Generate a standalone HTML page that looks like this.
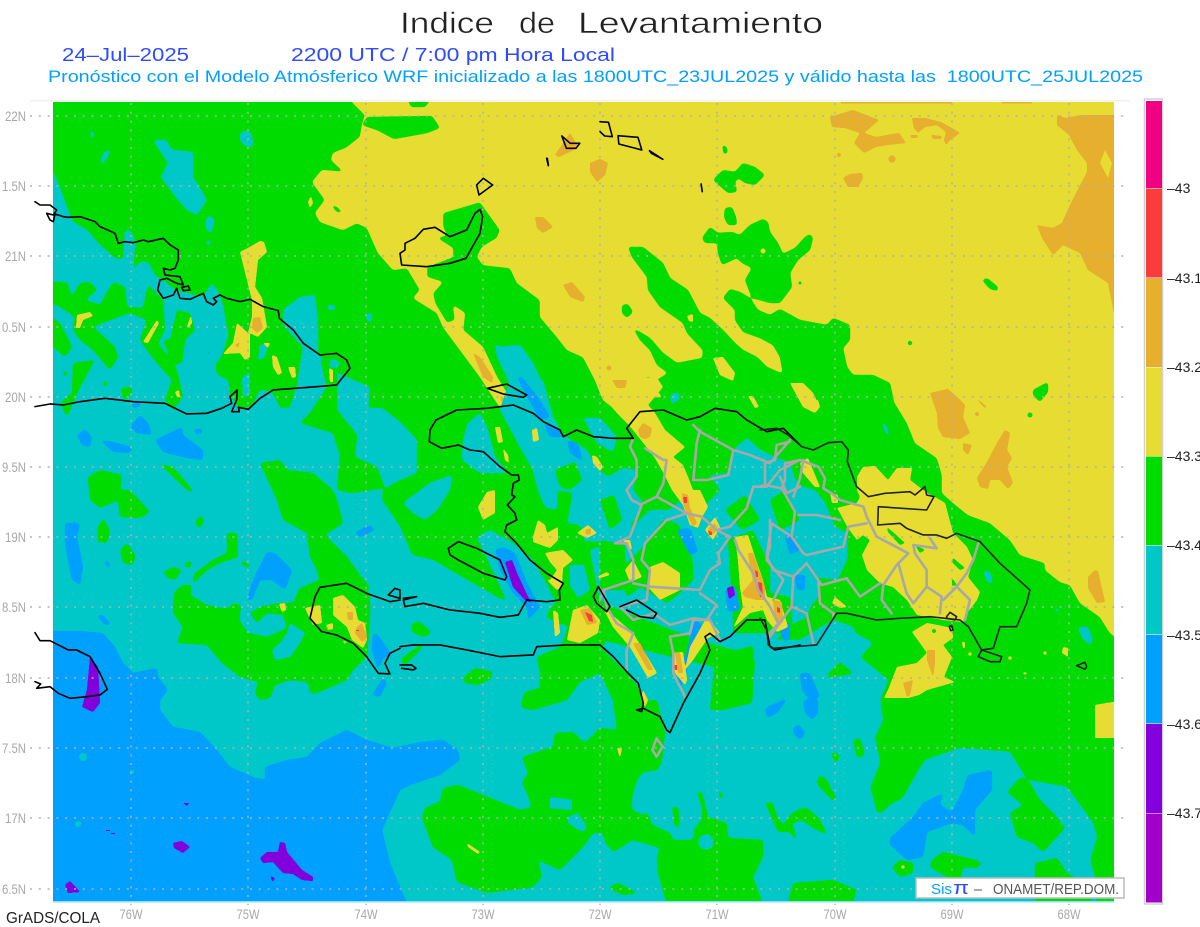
<!DOCTYPE html>
<html lang="es"><head><meta charset="utf-8"><title>Indice de Levantamiento</title>
<style>
html,body{margin:0;padding:0;background:#fff;width:1200px;height:927px;overflow:hidden}
svg{display:block}
text{font-family:"Liberation Sans",sans-serif}
.c{fill:none;stroke-linejoin:round;stroke-linecap:round}
.c polyline{vector-effect:non-scaling-stroke}
</style></head><body>
<svg width="1200" height="927" viewBox="0 0 1200 927" xmlns="http://www.w3.org/2000/svg">
<defs>
<clipPath id="m"><rect x="53" y="102" width="1061" height="799"/></clipPath>
<filter id="s" filterUnits="userSpaceOnUse" x="0" y="60" width="1200" height="867" color-interpolation-filters="sRGB">
<feGaussianBlur stdDeviation="1.5"/><feComponentTransfer><feFuncA type="linear" slope="8" intercept="-3.1"/></feComponentTransfer>
</filter>
<filter id="t" filterUnits="userSpaceOnUse" x="0" y="60" width="1200" height="867" color-interpolation-filters="sRGB">
<feGaussianBlur stdDeviation=".8"/><feComponentTransfer><feFuncA type="linear" slope="8" intercept="-3.1"/></feComponentTransfer>
</filter>
</defs>
<rect width="1200" height="927" fill="#fff"/>
<rect x="30" y="100" width="1100" height="1.5" fill="#f0f0f0"/>
<g clip-path="url(#m)">
<rect x="53" y="102" width="1061" height="799" fill="#00dc00"/>
<!-- big yellow -->
<g fill="#e6dc32" filter="url(#s)">
<polygon points="347,90 352,102 365,115 362,125 360,137 346,148 333,153 331,160 344,172 322,170 312,182 325,200 315,213 320,222 343,230 357,223 367,228 378,253 393,270 407,268 420,290 413,298 437,313 443,327 460,350 480,377 497,403 510,420 520,437 525,423 513,403 497,377 483,347 463,330 465,313 453,305 455,320 447,323 435,303 433,293 443,282 427,277 427,267 453,257 453,248 437,238 447,235 443,227 443,213 480,202 500,230 497,238 482,247 477,257 483,265 510,268 517,283 540,300 540,317 557,337 567,350 583,357 595,380 603,400 620,413 640,397 690,397 720,398 893,400 907,423 915,443 937,458 942,475 942,493 952,502 968,515 990,523 1010,540 1020,555 1045,563 1045,570 1060,582 1070,585 1080,603 1100,617 1110,633 1125,645 1125,90"/>
</g>
<rect x="841" y="102" width="111" height="1.5" fill="#e6af2d"/><rect x="1002" y="102" width="30" height="1.5" fill="#e6af2d"/>
<!-- orange north -->
<g fill="#e6af2d" filter="url(#t)">
<polygon points="1057,115 1065,118 1082,115 1125,115 1125,325 1114,313 1108,283 1088,270 1080,253 1063,245 1053,255 1042,238 1037,225 1053,228 1062,223 1070,205 1087,172 1087,163 1077,150 1069,135 1057,125"/>
<polygon points="830,117 853,110 866,115 879,120 864,133 876,137 899,133 906,143 887,145 876,147 864,153 854,143 860,133 845,128 832,127"/>
<polygon points="912,118 925,118 941,122 950,127 960,133 950,140 946,145 944,140 946,132 937,125 925,127 918,133 914,128"/>
<polygon points="910,135 918,135 917,138 911,138"/><polygon points="931,135 942,136 941,139 933,139"/>
<circle cx="892" cy="159" r="3.5"/><circle cx="839" cy="155" r="2"/>
<polygon points="843,178 850,174 862,173 863,178 858,187 848,187"/>
<polygon points="590,163 600,159 608,163 605,175 597,182 590,172"/>
<polygon points="555,155 570,133 576,143 578,148 559,157"/>
<polygon points="535,217 543,217 553,227 543,233 537,228"/>
<polygon points="563,285 572,282 585,297 583,302 570,297"/>
<circle cx="609" cy="368" r="2.5"/>
<polygon points="612,378 625,378 627,387 617,390"/>
<polygon points="631,400 634,400 634,408 632,408"/>
<polygon points="473,353 480,357 493,377 492,383 483,377"/>
<polygon points="500,397 503,397 508,413 505,412"/>
<polygon points="930,393 948,389 957,397 965,405 963,417 970,433 960,439 943,437 938,428 937,413"/>
<polygon points="963,443 972,445 968,455 963,450"/>
<polygon points="1005,430 1010,433 1007,450 1012,458 1007,467 1013,483 1008,489 1000,480 990,480 988,489 980,487 977,478 987,462 997,443"/>
<polygon points="1095,570 1098,571 1105,602 1097,603 1088,588 1088,577"/>
<polygon points="975,397 987,407 985,408 980,403"/><circle cx="977" cy="414" r="2"/>
</g>
<polygon fill="#e6dc32" points="1100,163 1105,150 1112,163 1108,178"/>
<!-- green over yellow -->
<g fill="#00dc00" filter="url(#s)">
<polygon points="628,247 643,247 663,263 670,278 688,290 700,313 710,318 723,330 735,343 743,350 757,357 767,367 783,374 780,357 773,345 760,338 743,332 735,320 735,310 723,298 730,289 740,292 750,298 758,310 770,315 780,309 800,320 827,325 833,318 850,325 850,340 843,348 847,367 853,375 873,375 890,383 895,407 903,420 903,430 720,430 717,397 702,363 703,350 700,347 687,333 683,323 660,307 648,290 647,277 632,257"/>
<polygon points="633,328 640,332 650,338 663,353 677,363 703,358 705,368 717,397 720,405 692,405 663,405 657,380 668,373 657,365 650,350 640,340"/>
<polygon points="643,380 648,377 657,382 665,391 653,393"/>
<polygon points="702,238 710,227 718,233 732,232 740,235 750,225 763,219 768,222 770,232 778,243 783,254 795,248 805,237 810,234 813,238 810,250 798,260 790,273 792,287 780,303 770,303 752,298 745,280 752,268 742,263 737,258 722,265 718,253 717,243 705,243"/>
<polygon points="713,180 723,170 735,172 743,163 755,167 765,175 755,185 745,183 738,178 735,182 737,192 728,193"/>
<polygon points="725,208 732,207 736,217 737,225 728,225 724,217"/>
<polygon points="722,145 726,146 728,152 724,155"/>
<polygon points="982,280 987,278 998,287 998,291 990,289"/>
<polygon points="1033,390 1048,382 1048,392 1040,402 1033,395"/>
<polygon points="406,95 434,95 425,107 411,107"/>
<polygon points="367,117 432,116 440,128 427,133 394,139 377,130 362,125"/>
<polygon points="330,204 337,207 343,213 337,212"/>
<polygon points="622,305 628,304 633,312 627,318 622,313"/>
</g>
<g fill="#00dc00"><circle cx="800" cy="283" r="1.5"/><circle cx="910" cy="343" r="2.2"/><circle cx="1030" cy="415" r="2.5"/></g>
<g fill="#e6dc32" filter="url(#t)">
<polygon points="713,358 723,357 735,373 733,381 720,375"/>
<polygon points="790,383 803,383 813,393 820,407 815,413 803,407"/>
<polygon points="748,396 753,396 759,407 755,408"/>
<polygon points="687,316 693,314 693,322 689,321"/>
<polygon points="308,202 311,196 313,203 310,208"/>
<circle cx="763" cy="251" r="2.5"/>
</g>
<!-- cyan -->
<g fill="#00c8c8" filter="url(#s)">
<polygon points="40,165 53,172 61,190 66,205 73,222 87,230 100,245 115,258 123,260 125,230 132,232 135,245 133,270 140,262 148,262 155,275 165,282 175,290 203,297 212,283 217,290 223,305 228,335 222,355 215,365 217,375 228,380 230,395 240,410 253,405 260,390 272,392 280,408 290,408 297,385 303,347 283,325 283,310 300,297 315,295 318,322 318,355 337,373 370,387 368,408 382,408 400,422 417,440 417,473 400,480 383,490 382,500 400,527 412,555 433,560 467,580 497,597 510,603 600,640 717,668 755,668 753,640 800,640 833,620 853,627 855,633 873,643 860,657 888,680 880,700 883,720 875,737 880,763 870,787 877,813 886,813 886,915 40,915"/>
<polygon points="878,817 890,805 903,798 913,780 925,760 960,748 1010,752 1027,780 1067,787 1093,823 1097,837 1090,860 1095,877 1097,915 878,915"/>
<polygon points="153,140 166,140 172,150 193,152 193,177 207,200 197,215 187,210 178,200 161,177 168,163"/>
<polygon points="90,130 93,131 95,138 91,137"/>
<polygon points="100,162 104,152 111,150 107,158 102,164"/>
<polygon points="240,134 246,130 252,135 253,147 245,146 240,140"/>
<polygon points="208,215 215,220 210,235 205,225"/>
<polygon points="206,240 211,241 210,246 207,245"/>
<polygon points="327,305 335,305 335,310 329,310"/>
<polygon points="366,314 372,313 372,321 367,322"/>
<polygon points="495,343 500,347 520,345 533,363 543,385 510,385 507,377 497,357"/>
<polygon points="510,380 543,380 553,417 563,435 587,450 597,468 608,477 623,468 637,470 633,490 643,503 630,527 617,543 573,540 568,520 573,493 557,490 557,510 545,507 538,490 533,470 520,447 500,410"/>
<polygon points="583,418 600,418 617,437 613,452 597,443"/>
<polygon points="468,423 480,413 487,427 495,457 508,473 480,473 462,460 463,440"/>
<polygon points="403,503 430,483 452,475 450,490 437,510 425,520 413,513"/>
<polygon points="477,537 490,530 513,543 533,560 542,577 560,583 557,600 547,613 543,633 527,640 517,623"/>
<polygon points="693,487 702,477 728,473 733,450 747,438 760,450 777,458 790,463 795,480 803,487 815,490 825,503 835,527 847,533 847,560 837,580 817,577 818,597 810,607 807,617 790,625 775,640 735,650 700,640 660,625 620,610 600,600 590,550 620,540 650,510 670,510"/>
<polygon points="670,395 678,392 680,398 672,405" />
<polygon points="882,423 885,423 890,435 886,434"/>
<polygon points="1078,627 1088,627 1093,640 1090,645 1082,638"/>
<polygon points="1053,608 1060,609 1057,613"/>
<polygon points="983,570 990,572 993,583 988,583"/>
<polygon points="330,358 340,362 338,368 331,366"/>
</g>
<!-- green islands on cyan -->
<g fill="#00dc00" filter="url(#s)">
<polygon points="45,282 67,282 72,297 80,283 90,282 97,290 85,300 100,305 113,282 125,287 127,307 143,308 148,285 163,300 165,330 158,343 177,370 183,397 173,410 165,400 172,380 152,357 140,340 147,320 130,313 110,320 93,327 115,347 118,357 110,370 93,350 80,340 73,330 75,317 60,307 45,300"/>
<polygon points="45,313 60,323 72,347 65,357 45,340"/>
<polygon points="73,363 95,360 80,387 67,417 60,403 72,393"/>
<polygon points="62,370 68,373 65,378"/>
<polygon points="102,385 107,378 107,387"/>
<polygon points="122,387 133,388 128,400 122,397"/>
<polygon points="177,310 190,313 195,330 185,340 182,363 173,365 163,340 170,340"/>
<polygon points="155,463 173,467 195,493 187,490 163,467"/>
<polygon points="88,477 100,470 122,475 120,490 130,490 150,512 140,518 120,517 118,500 100,508 90,500"/>
<polygon points="98,527 103,518 110,530 107,543 98,542"/>
<polygon points="120,550 127,543 136,557 132,565 123,563"/>
<polygon points="195,523 200,515 204,520 200,529"/>
<polygon points="163,572 173,567 182,570 175,580 168,578"/>
<polygon points="182,567 190,560 192,567"/>
<polygon points="192,585 195,573 213,560 227,553 227,533 237,533 238,557 220,563 207,570 197,580"/>
<polygon points="240,560 250,565 250,568 242,565"/>
<polygon points="174,593 182,585 192,585 190,595 207,605 220,608 228,608 235,602 241,607 239,620 248,633 267,637 287,628 283,615 267,613 257,623 250,613 260,607 280,603 293,603 300,588 320,580 347,583 370,593 370,617 367,657 353,670 347,680 317,693 310,693 308,682 290,680 275,685 270,698 260,700 255,693 258,682 240,677 222,663 207,645 177,643 183,627 173,613"/>
<polygon points="277,500 283,520 307,533 310,557 317,570 320,582 347,585 372,590 360,575 347,557 325,535 343,523 337,500"/>
<polygon points="260,463 280,460 287,470 313,473 333,490 337,500 277,500"/>
<polygon points="320,357 337,373 337,410 357,435 355,457 377,467 385,488 352,493 337,490 340,455 333,433 300,423 310,413 327,387"/>
<polygon points="382,500 400,490 417,480 450,450 417,440 417,475 400,480 383,490"/>
<polygon points="67,642 75,648 83,670 78,680 72,682 77,670 72,657"/>
<polygon points="412,623 420,622 432,633 423,637 412,632"/>
<polygon points="400,660 410,652 425,642 420,650 405,665"/>
<polygon points="463,678 475,668 493,672 490,680 477,685 465,683"/>
<polygon points="522,700 525,692 540,688 540,673 537,657 560,647 600,647 613,660 627,673 640,690 647,703 657,700 613,700 600,673 580,682 567,700 533,710 522,708"/>
<polygon points="422,818 425,808 440,802 443,788 458,785 483,795 520,810 532,807 527,793 522,783 528,773 522,757 553,747 555,733 573,732 585,743 600,728 617,730 613,700 657,700 665,733 662,760 658,770 643,772 637,780 632,797 632,810 643,815 648,813 652,825 670,833 673,840 693,840 695,827 702,820 702,807 697,792 702,792 708,817 727,823 728,838 763,840 763,857 753,877 767,915 670,915 658,873 657,857 660,848 633,840 613,852 605,842 603,833 593,833 583,847 560,870 538,860 542,877 533,887 487,893 457,882 452,860 433,847"/>
<polygon points="710,710 715,660 755,660 752,703 723,710"/>
<polygon points="765,802 773,803 777,817 783,825 792,813 805,807 818,817 828,835 813,828 802,820 792,823 798,843 790,832 778,832"/>
<polygon points="817,777 825,777 837,800 832,800 818,785"/>
<polygon points="853,740 860,738 865,755 857,758"/>
<polygon points="832,752 840,755 837,763 832,758"/>
<polygon points="672,807 678,807 680,827 675,827"/>
<polygon points="718,793 723,792 722,802"/>
<polygon points="785,915 793,883 833,880 857,890 848,915"/>
<polygon points="608,888 618,883 638,893 623,895"/>
<polygon points="825,677 840,662 853,673 847,675 830,677"/>
<polygon points="1007,792 1020,778 1027,778 1040,800 1055,815 1065,828 1043,852 1033,843 1017,837 1010,813 1023,805"/>
<polygon points="1035,863 1057,858 1067,873 1090,887 1093,915 1037,915 1035,877"/>
<polygon points="932,860 943,852 975,860 982,863 977,868 963,867 960,880 947,877 930,867"/>
<polygon points="892,867 900,860 913,863 913,873 900,877"/>
<polygon points="643,547 663,520 677,523 690,543 693,567 693,580 680,593 667,603 640,587 627,597 620,570"/>
<polygon points="728,540 753,530 770,567 770,593 790,597 793,633 733,633 733,613"/>
<polygon points="560,650 577,600 590,598 610,620 605,645"/>
<polygon points="555,470 575,462 582,480 570,490 560,487"/>
<polygon points="600,500 614,495 622,520 610,530"/>
<polygon points="690,480 705,470 720,490 700,510"/>
<polygon points="725,510 745,495 760,520 742,530"/>
<polygon points="770,500 785,490 800,520 780,530"/>
<polygon points="600,540 625,545 625,590 600,590"/>
<polygon points="540,520 580,525 590,560 585,600 555,600 540,570"/>
</g>
<g fill="#00c8c8" filter="url(#t)">
<polygon points="272,650 280,643 287,633 290,623 305,633 300,643 290,657 275,660"/>
<polygon points="550,797 572,800 572,810 550,808"/>
<polygon points="568,817 578,813 587,827 582,832 568,823"/>
<circle cx="706" cy="842" r="7.5"/>
<polygon points="260,345 268,343 265,357 258,360"/>
<polygon points="242,378 250,372 250,395 243,397"/>
<polygon points="570,565 584,565 590,590 578,598 570,585"/>
<polygon points="700,545 715,550 718,565 705,575"/>
</g>
<!-- blue -->
<g fill="#00a0ff" filter="url(#s)">
<polygon points="40,631 78,631 103,633 115,647 123,663 133,673 157,668 158,677 168,690 160,700 160,710 173,727 200,732 217,750 230,767 253,777 265,780 265,767 287,760 307,757 320,743 347,730 367,740 393,748 420,742 443,740 458,750 460,760 440,775 410,785 400,790 382,830 390,863 400,887 412,915 40,915"/>
<polygon points="890,838 913,817 923,803 943,793 940,805 952,812 963,790 968,775 992,770 992,790 975,810 975,837 963,825 952,823 927,832 923,857 907,860 890,845"/>
<polygon points="130,427 140,415 148,423 152,435 137,433"/>
<polygon points="155,440 182,427 183,435 203,450 203,460 187,458 163,452"/>
<polygon points="77,435 85,429 92,437 90,447 82,445"/>
<polygon points="100,440 113,442 132,447 130,453 113,452"/>
<polygon points="193,430 202,428 202,433 197,435"/>
<polygon points="132,403 140,402 142,405 133,409"/>
<polygon points="207,352 212,350 208,357"/>
<polygon points="65,523 80,523 77,537 83,567 80,585 72,580 68,560 65,543"/>
<polygon points="105,560 110,563 110,568 105,565"/>
<polygon points="247,600 253,580 267,552 275,553 292,570 285,590 272,580 260,580 252,600"/>
<polygon points="97,615 103,615 111,625 105,625"/>
<polygon points="355,532 370,525 375,530 360,537"/>
<polygon points="373,633 378,635 392,655 383,658 378,670 372,650"/>
<polygon points="372,695 383,678 387,683 380,697"/>
<polygon points="517,377 522,377 540,400 550,417 540,420"/>
<polygon points="543,423 560,430 563,437 550,437"/>
<polygon points="567,440 578,443 583,462 570,453"/>
<polygon points="495,550 503,547 515,553 527,583 540,607 528,620 527,607 513,593 500,570"/>
<polygon points="677,530 690,528 698,552 690,555"/>
<polygon points="725,590 735,585 740,610 728,612"/>
<polygon points="765,708 788,698 777,713 767,718"/>
<polygon points="803,700 818,700 818,713 812,720 805,713"/>
<polygon points="792,730 798,724 805,732 802,739 797,738"/>
<polygon points="800,673 810,673 820,697 810,700 802,690"/>
<polygon points="780,625 790,622 790,640 782,640"/>
<polygon points="785,535 793,535 800,550 790,555"/>
<polygon points="795,575 805,575 805,590 797,590"/>
<polygon points="675,660 685,658 695,620 702,625 680,690"/>
</g>
<!-- yellow islands -->
<g fill="#e6dc32" filter="url(#t)">
<polygon points="597,380 603,397 617,413 627,423 633,430 645,445 655,458 663,472 672,490 683,505 690,525 698,528 702,517 708,507 700,490 693,490 688,477 683,465 673,457 685,447 665,430 655,413 648,405 663,387 657,378 597,378"/>
<polygon points="857,477 863,467 875,466 888,480 897,468 912,468 910,480 927,493 935,497 945,503 953,533 967,547 973,560 968,577 980,592 977,600 967,613 963,622 943,620 917,615 907,600 893,587 880,583 867,570 862,555 870,540 863,535 857,540 848,528 840,513 837,508 857,503 860,497 857,490"/>
<polygon points="800,463 808,458 820,487 815,487 803,473"/><polygon points="830,493 838,495 838,503 832,503"/>
<polygon points="835,597 847,607 840,608 832,603"/>
<polygon points="800,400 818,400 820,407 815,412 807,407"/>
<polygon points="912,632 927,623 952,628 953,638 943,645 952,657 944,677 955,682 927,690 919,695 908,698 884,698 888,690 897,667 917,663 927,653 920,643"/>
<polygon points="1063,647 1068,648 1068,657 1062,653"/><polygon points="962,642 965,642 965,648 963,648"/>
<polygon points="1023,672 1028,673 1024,675"/><circle cx="1010" cy="658" r="1.8"/><circle cx="970" cy="654" r="1.8"/><circle cx="1045" cy="653" r="1.8"/>
<polygon points="1095,705 1125,700 1125,738 1095,738"/>
<polygon points="240,252 248,248 260,241 264,242 267,252 258,260 255,287 262,298 267,327 258,337 250,333 250,357 245,360 240,353 223,354 233,343 237,323 248,333 252,317 252,300 247,280"/>
<polygon points="77,315 90,312 93,316 83,320 80,328 76,328"/>
<polygon points="143,342 157,320 159,323 148,343"/>
<polygon points="187,327 191,315 192,323 188,328"/>
<polygon points="263,343 270,343 268,348"/>
<polygon points="272,355 277,357 282,373 278,375 273,367"/>
<polygon points="288,367 295,367 296,377 292,378"/>
<polygon points="329,368 333,370 333,382 330,382"/>
<polygon points="175,392 179,390 180,397 177,397"/>
<polygon points="333,598 343,595 355,607 358,620 365,623 367,640 363,648 352,640 347,627 333,615"/>
<polygon points="305,608 320,605 322,623 313,625"/>
<polygon points="279,604 285,603 286,610 282,612"/>
<polygon points="326,625 333,623 333,629 328,630"/>
<polygon points="342,640 347,642 345,644"/>
<polygon points="478,507 487,492 495,490 495,513 483,520"/>
<polygon points="495,427 500,427 503,442 498,443"/>
<polygon points="532,430 537,428 539,440 533,442"/>
<polygon points="503,448 508,455 509,463 505,460"/>
<polygon points="592,455 597,457 603,467 600,471 593,463"/>
<polygon points="533,537 538,520 545,525 547,533 558,527 558,540 550,548 533,542"/>
<polygon points="577,533 588,525 597,533 587,538"/>
<polygon points="545,553 563,550 573,560 563,568 562,583 550,580 557,570 550,562"/>
<polygon points="567,640 573,610 587,605 600,620 598,633 580,643"/>
<polygon points="553,610 558,613 560,633 555,637"/>
<polygon points="603,608 610,613 633,633 657,673 648,678 630,647 613,627"/>
<polygon points="673,653 683,652 687,680 685,685 675,673"/>
<polygon points="690,647 707,617 720,633 708,638 693,660 685,670"/>
<polygon points="705,530 715,517 720,527 713,540"/>
<polygon points="623,540 630,540 632,550 627,547"/>
<polygon points="597,577 607,572 610,575 600,578"/>
<polygon points="625,570 633,560 642,577 630,582"/>
<polygon points="547,580 560,580 563,587 557,590"/>
<polygon points="643,690 648,700 645,707 641,697"/>
<polygon points="617,748 622,748 620,758"/>
<polygon points="467,843 480,852 478,854 468,847"/>
<polygon points="650,567 663,562 680,573 680,590 660,600 648,587"/>
<polygon points="735,537 748,535 755,557 763,580 767,597 780,600 788,627 777,632 767,620 763,610 750,613 733,628 743,607 740,587 738,560"/>
<circle cx="903" cy="867" r="1.8"/>
</g>
<g fill="#00dc00" filter="url(#t)">
<polygon points="887,527 905,543 900,545 888,532"/>
<polygon points="953,558 965,568 960,570 952,562"/>
<polygon points="952,578 957,585 952,586"/>
<polygon points="915,545 925,550 920,553"/>
<circle cx="934" cy="631" r="2"/>
</g>
<!-- orange islands -->
<g fill="#e6af2d" filter="url(#t)">
<polygon points="638,430 643,423 652,428 650,437 645,439 640,437"/>
<polygon points="612,380 627,380 625,388 617,388"/>
<polygon points="682,493 688,495 690,508 697,523 693,527 688,517 683,503"/>
<polygon points="253,318 260,317 263,328 257,333 252,328"/>
<polygon points="235,345 240,342 238,348"/>
<polygon points="347,612 353,612 353,620 348,620"/>
<polygon points="357,627 362,623 367,638 362,642 355,633"/>
<polygon points="927,650 935,650 935,663 933,677 927,660"/>
<polygon points="903,683 913,680 910,695 907,697"/>
<polygon points="748,553 753,553 765,587 765,600 757,600 745,597 742,593 753,580 750,567"/>
<polygon points="773,600 782,602 783,623 775,620"/>
<polygon points="580,610 590,608 597,623 587,625"/>
<polygon points="633,643 640,643 653,670 648,670"/>
<polygon points="675,653 680,653 683,673 678,673"/>
<polygon points="708,528 715,523 717,530 712,535"/>
<polygon points="585,530 591,528 591,534 586,535"/>
</g>
<g fill="#fa3c3c">
<polygon points="683,497 687,497 687,503 684,503"/>
<polygon points="755,570 758,572 758,577 756,577"/>
<polygon points="758,582 762,583 763,597 760,597"/>
<polygon points="777,607 780,608 780,613 777,612"/>
<polygon points="585,612 592,615 593,622 589,621"/>
<polygon points="673,665 677,665 677,670 675,670"/>
<polygon points="708,530 712,532 712,535 709,535"/>
<rect x="356" y="630" width="3" height="1"/>
</g>
<!-- purple -->
<g fill="#8200dc" filter="url(#t)">
<polygon points="505,562 512,560 517,573 528,597 532,603 525,600 513,587"/>
<polygon points="90,657 98,667 100,703 93,712 82,707 87,690"/>
<polygon points="260,858 267,852 278,852 280,842 285,843 287,852 302,870 313,877 313,881 302,880 293,874 283,873 273,862 263,863"/>
<polygon points="270,876 275,878 273,882"/>
<polygon points="173,843 182,841 190,847 183,853 174,848"/>
<polygon points="65,885 70,881 80,892 68,893"/>
<polygon points="727,588 733,586 735,595 729,599"/>
</g>
<g fill="#8200dc"><polygon points="183,803 189,803 187,806"/>
<rect x="106" y="830" width="4" height="1"/><rect x="111" y="833" width="4" height="1"/></g>
<g fill="#00c8c8"><circle cx="78" cy="824" r="3"/><circle cx="83" cy="757" r="4"/><circle cx="132" cy="772" r="2"/></g>
</g>

<!-- grid -->
<g stroke="#b0b0b0" stroke-width="1.5" stroke-dasharray="2 6.8" fill="none">
<path d="M30 116H1130M30 186H1130M30 256H1130M30 327H1130M30 397H1130M30 467H1130M30 537H1130M30 607H1130M30 678H1130M30 748H1130M30 818H1130M30 889H1130"/>
<path d="M131 103V905M248 103V905M366 103V905M483 103V905M600 103V905M717 103V905M835 103V905M952 103V905M1069 103V905"/>
</g>

<!-- provinces gray -->
<g class="c" stroke="#a8a8a8" stroke-width="2.6" clip-path="url(#m)">
<g transform="translate(400,380) scale(.3333)">
<polyline points="700,175 690,200 710,240 710,290 680,330 695,360 725,375 690,470 645,490 680,490 700,540 700,600 610,630 600,660"/>
<polyline points="735,205 790,240 800,240 790,310 770,350 720,375"/>
<polyline points="770,350 860,400 905,410 950,450 990,470 955,520 960,550 930,570 900,630 750,620 700,610"/>
<polyline points="735,490 800,420 860,400"/>
<polyline points="735,490 725,540 750,570 740,660 660,680 700,720 760,700 810,735 880,715 920,720 950,675 900,640"/>
<polyline points="880,300 920,300 985,285 1000,210"/>
<polyline points="880,135 900,155 1000,210 1050,225 1110,250 1170,180"/>
<polyline points="880,300 890,190 900,150"/>
<polyline points="1200,240 1140,270 1100,320 1060,320 1040,385 990,440 950,450"/>
<polyline points="1005,480 1015,510 1060,580 1075,630 1110,680 1135,730 1100,770"/>
<polyline points="1200,320 1160,340 1140,290"/>
<polyline points="1110,420 1110,500 1100,540 1150,600 1120,660"/>
<polyline points="610,630 620,680 650,730 700,760 680,810 680,870"/>
<polyline points="810,770 820,820 820,880 855,950"/>
<polyline points="810,770 870,760 880,720 930,720 960,780"/>
<polyline points="770,1075 788,1100 770,1130 757,1110 770,1075"/>
</g>
<g transform="translate(760,400) scale(.3333)">
<polyline points="90,125 50,135 45,180 15,190 15,255 65,265 75,240 75,190 120,180 175,200 195,235 190,265 215,280 240,300 310,320 320,350 350,410 445,460 410,495 370,555 365,600 395,640"/>
<polyline points="15,255 0,260"/>
<polyline points="65,265 105,335 95,410 130,460 140,465 250,440 265,380 320,370"/>
<polyline points="240,360 170,345 115,345"/>
<polyline points="130,180 120,235 100,290"/>
<polyline points="415,490 440,580 460,610 500,560 500,510 465,460 460,435 530,445 510,415"/>
<polyline points="140,490 185,555 260,535 300,590 360,550"/>
<polyline points="140,490 100,530 40,510 20,470 35,370 95,410"/>
<polyline points="500,560 545,590 540,640"/>
<polyline points="590,560 630,600 615,660"/>
<polyline points="590,560 550,600"/>
<polyline points="590,560 620,520 640,480 655,430"/>
<polyline points="175,540 180,610 220,640 220,650"/>
<polyline points="100,530 95,620 30,710"/>
<polyline points="95,620 140,640 160,730"/>
</g>
</g>

<!-- coasts -->
<g class="c" stroke="#000" stroke-width="1.6">
<g transform="translate(0,200) scale(.3333)">
<polyline points="105,5 120,15 150,15 170,30 160,45 140,40 150,60 160,65 165,42 190,50 205,52 240,50 285,65 300,80 345,100 355,130 375,125 400,128 430,120 445,125 490,115 510,135 535,150 535,180 525,205 510,210 490,205 495,225 540,230 550,255 530,250 500,235 480,240 473,270 490,295 520,285 530,265 540,295 570,298 610,280 620,305 640,315 650,305 640,295 660,285 680,295 720,305 750,298 790,320 835,332 838,355 880,390 910,430 960,465 1010,460 1040,480 1050,505 1010,555 950,560 820,570 780,595 745,628 715,622 718,635 695,635 710,600 712,570 690,590 695,610 665,625 620,640 560,642 495,610 400,605 315,595 240,605 190,615 150,612 105,620"/>
<polyline points="545,262 565,258 570,270 550,272 545,262"/>
</g>
<g transform="translate(0,500) scale(.3333)">
<polyline points="105,398 120,422 150,422 205,450 230,450 270,470 300,520 322,568 300,585 260,590 210,595 175,580 150,560 110,565 122,552 105,545"/>
<polyline points="1200,300 1170,305 1100,280 1040,250 960,262 945,290 930,355 965,395 1010,405 1060,430 1100,470 1135,520 1170,522 1155,490 1170,460 1200,445"/>
<polyline points="1165,285 1185,265 1200,270 1200,295 1165,285"/>
</g>
<g transform="translate(400,380) scale(.3333)">
<polyline points="108,120 90,150 88,185 125,205 175,195 210,210 250,215 300,260 335,285 355,285 358,300 340,310 335,345 345,350 322,375 345,400 350,420 320,435 315,455 350,490 390,540 440,580 490,610 478,630 480,660 440,665 380,660 355,705 300,712 240,700 150,690 70,670 15,680 10,660 50,650 10,655"/>
<polyline points="108,120 170,90 260,85 340,75 400,100 430,125 480,150 490,170 530,150 580,170 640,175 700,175"/>
<polyline points="145,505 175,485 230,505 300,540 320,590 315,600 250,580 175,540 150,525 145,505"/>
<polyline points="262,25 320,12 380,45 370,52 310,42 262,25"/>
<polyline points="580,650 595,620 630,680 620,695 590,670 580,650"/>
<polyline points="660,680 710,660 770,700 760,715 720,710 680,690"/>
<polyline points="0,800 40,795 120,795 200,810 300,830 400,825 410,800 500,795 600,795 640,830 680,875 715,910 730,970 725,995 710,990 730,985 780,1010 800,1050 810,1058 850,970 900,880 930,810 915,770 930,760 960,785 990,770 1040,720 1095,720 1110,800 1125,810 1200,795"/>
<polyline points="0,855 35,855 48,865 40,870 5,865"/>
<polyline points="700,175 680,145 720,95 790,90 860,120 900,110 945,85 1010,95 1040,120 1100,155 1150,145 1200,195"/>
</g>
<g transform="translate(760,400) scale(.3333)" stroke="#222">
<polyline points="0,90 50,85 85,105 125,140 160,150 205,128 245,125 265,150 262,185 290,260 325,290 375,280 450,275 465,285 495,260 500,285 522,290 500,330 355,320 353,375 420,370 440,385 490,405 530,405 560,415 590,400 660,425 720,490 810,570 800,610 770,680 720,680 700,745 665,750 655,770 690,785 720,785 725,770 665,750 625,680 600,660 510,650 420,655 350,660 260,640 230,640 170,735 40,745 25,735 20,690 0,655"/>
<polyline points="950,797 975,787 980,800 975,808 950,797"/>
<polyline points="560,650 570,637 590,650 585,660 560,655 560,650"/>
<polyline points="568,680 575,676 579,690 572,692 568,680"/>
</g>
<g transform="translate(300,150) scale(.3333)">
<polyline points="305,345 300,310 315,300 315,280 345,265 370,238 405,232 450,260 500,240 525,190 540,178 548,200 540,250 498,325 450,340 380,350 305,345"/>
<polyline points="530,105 550,85 578,105 537,135 530,105"/>
<polyline points="740,25 745,47"/>
</g>
<g transform="translate(0,0) scale(.3827,.3333)">
<polyline points="1468,408 1490,430 1515,430 1505,445 1480,445 1468,408"/>
<polyline points="1430,475 1433,495"/>
<polyline points="1568,365 1590,367 1600,410 1580,408 1568,395"/>
<polyline points="1615,407 1667,412 1677,450 1617,432 1615,407"/>
<polyline points="1697,452 1732,478 1702,460 1697,452"/>
<polyline points="1832,552 1835,575"/>
</g>
</g>

<!-- titles -->
<g font-size="30" fill="#222" stroke="#fff" stroke-width=".45" paint-order="fill">
<text x="400" y="33" textLength="94" lengthAdjust="spacingAndGlyphs">Indice</text>
<text x="519" y="33" textLength="36" lengthAdjust="spacingAndGlyphs">de</text>
<text x="578" y="33" textLength="245" lengthAdjust="spacingAndGlyphs">Levantamiento</text>
</g>
<text x="62" y="61" font-size="18" fill="#2f4bff" textLength="127" lengthAdjust="spacingAndGlyphs">24–Jul–2025</text>
<text x="291" y="61" font-size="18" fill="#2f4bff" textLength="324" lengthAdjust="spacingAndGlyphs">2200 UTC / 7:00 pm Hora Local</text>
<text x="48" y="82" font-size="17" fill="#00a0ff" textLength="1095" lengthAdjust="spacingAndGlyphs" xml:space="preserve">Pronóstico con el Modelo Atmósferico WRF inicializado a las 1800UTC_23JUL2025 y válido hasta las  1800UTC_25JUL2025</text>

<!-- y labels -->
<g font-size="14" fill="#a8a8a8" text-anchor="end">
<text x="26" y="121" textLength="21" lengthAdjust="spacingAndGlyphs">22N</text><text x="26" y="191" textLength="24" lengthAdjust="spacingAndGlyphs">1.5N</text><text x="26" y="261" textLength="21" lengthAdjust="spacingAndGlyphs">21N</text><text x="26" y="332" textLength="24" lengthAdjust="spacingAndGlyphs">0.5N</text><text x="26" y="402" textLength="21" lengthAdjust="spacingAndGlyphs">20N</text><text x="26" y="472" textLength="24" lengthAdjust="spacingAndGlyphs">9.5N</text><text x="26" y="542" textLength="21" lengthAdjust="spacingAndGlyphs">19N</text><text x="26" y="612" textLength="24" lengthAdjust="spacingAndGlyphs">8.5N</text><text x="26" y="683" textLength="21" lengthAdjust="spacingAndGlyphs">18N</text><text x="26" y="753" textLength="24" lengthAdjust="spacingAndGlyphs">7.5N</text><text x="26" y="823" textLength="21" lengthAdjust="spacingAndGlyphs">17N</text><text x="26" y="894" textLength="24" lengthAdjust="spacingAndGlyphs">6.5N</text>
</g>
<g font-size="14" fill="#a8a8a8" text-anchor="middle">
<text x="131" y="919" textLength="23" lengthAdjust="spacingAndGlyphs">76W</text><text x="248" y="919" textLength="23" lengthAdjust="spacingAndGlyphs">75W</text><text x="366" y="919" textLength="23" lengthAdjust="spacingAndGlyphs">74W</text><text x="483" y="919" textLength="23" lengthAdjust="spacingAndGlyphs">73W</text><text x="600" y="919" textLength="23" lengthAdjust="spacingAndGlyphs">72W</text><text x="717" y="919" textLength="23" lengthAdjust="spacingAndGlyphs">71W</text><text x="835" y="919" textLength="23" lengthAdjust="spacingAndGlyphs">70W</text><text x="952" y="919" textLength="23" lengthAdjust="spacingAndGlyphs">69W</text><text x="1069" y="919" textLength="23" lengthAdjust="spacingAndGlyphs">68W</text>
</g>
<text x="6" y="923" font-size="16" fill="#222" textLength="94" lengthAdjust="spacingAndGlyphs">GrADS/COLA</text>

<!-- logo box -->
<rect x="916" y="878" width="208" height="20" fill="#fff" stroke="#bcbcbc" stroke-width="1.5"/>
<text x="931" y="894" font-size="15" fill="#00a0ff" textLength="21" lengthAdjust="spacingAndGlyphs">Sis</text>
<text x="953" y="894" font-size="18" fill="#2f4bff" textLength="16" lengthAdjust="spacingAndGlyphs">π</text>
<text x="974" y="894" font-size="14.5" fill="#555">–</text>
<text x="993" y="894" font-size="14.5" fill="#555" textLength="126" lengthAdjust="spacingAndGlyphs">ONAMET/REP.DOM.</text>

<!-- colorbar -->
<rect x="1144.5" y="99" width="18" height="805" fill="#fff" stroke="#d0d0d0" stroke-width="1.5"/>
<rect x="1146" y="101" width="16" height="87" fill="#f00082"/>
<rect x="1146" y="188.5" width="16" height="89" fill="#fa3c3c"/>
<rect x="1146" y="278" width="16" height="89" fill="#e6af2d"/>
<rect x="1146" y="367.5" width="16" height="88.5" fill="#e6dc32"/>
<rect x="1146" y="456.5" width="16" height="88.5" fill="#00dc00"/>
<rect x="1146" y="545.5" width="16" height="89" fill="#00c8c8"/>
<rect x="1146" y="635" width="16" height="88.5" fill="#00a0ff"/>
<rect x="1146" y="724" width="16" height="89" fill="#8200dc"/>
<rect x="1146" y="813.5" width="16" height="89" fill="#a000c8"/>
<g font-size="14" fill="#222">
<text x="1167" y="193">–43</text><text x="1167" y="283">–43.1</text><text x="1167" y="372">–43.2</text><text x="1167" y="461">–43.3</text><text x="1167" y="550">–43.4</text><text x="1167" y="640">–43.5</text><text x="1167" y="729">–43.6</text><text x="1167" y="818">–43.7</text>
</g>
<rect x="53" y="901" width="1061" height="1.5" fill="#8fdcff"/>
</svg>
</body></html>
